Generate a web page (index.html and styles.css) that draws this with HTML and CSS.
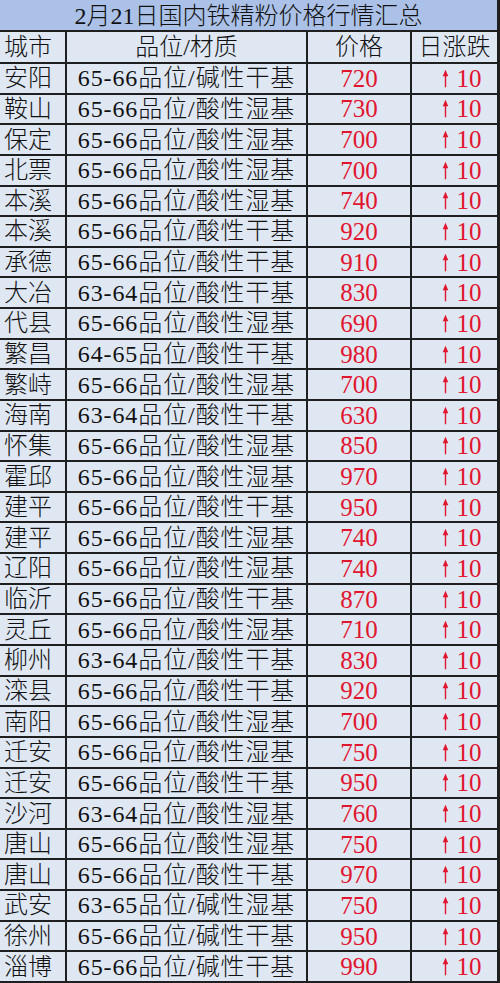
FILE: index.html
```html
<!DOCTYPE html>
<html lang="zh-CN">
<head>
<meta charset="utf-8">
<title>2月21日国内铁精粉价格行情汇总</title>
<link rel="stylesheet" href="styles.css">
</head>
<body>
<div class="sheet">
  <div class="title">2月21日国内铁精粉价格行情汇总</div>
  <div class="hd city">城市</div><div class="hd spec-h">品位/材质</div><div class="hd price-h">价格</div><div class="hd chg-h">日涨跌</div>

  <div class="city">安阳</div><div class="spec">65-66品位/碱性干基</div><div class="price">720</div><div class="chg"><svg class="up" viewBox="0 0 8 20"><path d="M4 20V5"/><polygon points="0.8,7.5 4,0 7.2,7.5"/></svg>10</div>
  <div class="city">鞍山</div><div class="spec">65-66品位/酸性湿基</div><div class="price">730</div><div class="chg"><svg class="up" viewBox="0 0 8 20"><path d="M4 20V5"/><polygon points="0.8,7.5 4,0 7.2,7.5"/></svg>10</div>
  <div class="city">保定</div><div class="spec">65-66品位/酸性湿基</div><div class="price">700</div><div class="chg"><svg class="up" viewBox="0 0 8 20"><path d="M4 20V5"/><polygon points="0.8,7.5 4,0 7.2,7.5"/></svg>10</div>
  <div class="city">北票</div><div class="spec">65-66品位/酸性湿基</div><div class="price">700</div><div class="chg"><svg class="up" viewBox="0 0 8 20"><path d="M4 20V5"/><polygon points="0.8,7.5 4,0 7.2,7.5"/></svg>10</div>
  <div class="city">本溪</div><div class="spec">65-66品位/酸性湿基</div><div class="price">740</div><div class="chg"><svg class="up" viewBox="0 0 8 20"><path d="M4 20V5"/><polygon points="0.8,7.5 4,0 7.2,7.5"/></svg>10</div>
  <div class="city">本溪</div><div class="spec">65-66品位/酸性干基</div><div class="price">920</div><div class="chg"><svg class="up" viewBox="0 0 8 20"><path d="M4 20V5"/><polygon points="0.8,7.5 4,0 7.2,7.5"/></svg>10</div>
  <div class="city">承德</div><div class="spec">65-66品位/酸性干基</div><div class="price">910</div><div class="chg"><svg class="up" viewBox="0 0 8 20"><path d="M4 20V5"/><polygon points="0.8,7.5 4,0 7.2,7.5"/></svg>10</div>
  <div class="city">大冶</div><div class="spec">63-64品位/酸性干基</div><div class="price">830</div><div class="chg"><svg class="up" viewBox="0 0 8 20"><path d="M4 20V5"/><polygon points="0.8,7.5 4,0 7.2,7.5"/></svg>10</div>
  <div class="city">代县</div><div class="spec">65-66品位/酸性湿基</div><div class="price">690</div><div class="chg"><svg class="up" viewBox="0 0 8 20"><path d="M4 20V5"/><polygon points="0.8,7.5 4,0 7.2,7.5"/></svg>10</div>
  <div class="city">繁昌</div><div class="spec">64-65品位/酸性干基</div><div class="price">980</div><div class="chg"><svg class="up" viewBox="0 0 8 20"><path d="M4 20V5"/><polygon points="0.8,7.5 4,0 7.2,7.5"/></svg>10</div>
  <div class="city">繁峙</div><div class="spec">65-66品位/酸性湿基</div><div class="price">700</div><div class="chg"><svg class="up" viewBox="0 0 8 20"><path d="M4 20V5"/><polygon points="0.8,7.5 4,0 7.2,7.5"/></svg>10</div>
  <div class="city">海南</div><div class="spec">63-64品位/酸性干基</div><div class="price">630</div><div class="chg"><svg class="up" viewBox="0 0 8 20"><path d="M4 20V5"/><polygon points="0.8,7.5 4,0 7.2,7.5"/></svg>10</div>
  <div class="city">怀集</div><div class="spec">65-66品位/酸性湿基</div><div class="price">850</div><div class="chg"><svg class="up" viewBox="0 0 8 20"><path d="M4 20V5"/><polygon points="0.8,7.5 4,0 7.2,7.5"/></svg>10</div>
  <div class="city">霍邱</div><div class="spec">65-66品位/酸性湿基</div><div class="price">970</div><div class="chg"><svg class="up" viewBox="0 0 8 20"><path d="M4 20V5"/><polygon points="0.8,7.5 4,0 7.2,7.5"/></svg>10</div>
  <div class="city">建平</div><div class="spec">65-66品位/酸性干基</div><div class="price">950</div><div class="chg"><svg class="up" viewBox="0 0 8 20"><path d="M4 20V5"/><polygon points="0.8,7.5 4,0 7.2,7.5"/></svg>10</div>
  <div class="city">建平</div><div class="spec">65-66品位/酸性湿基</div><div class="price">740</div><div class="chg"><svg class="up" viewBox="0 0 8 20"><path d="M4 20V5"/><polygon points="0.8,7.5 4,0 7.2,7.5"/></svg>10</div>
  <div class="city">辽阳</div><div class="spec">65-66品位/酸性湿基</div><div class="price">740</div><div class="chg"><svg class="up" viewBox="0 0 8 20"><path d="M4 20V5"/><polygon points="0.8,7.5 4,0 7.2,7.5"/></svg>10</div>
  <div class="city">临沂</div><div class="spec">65-66品位/酸性干基</div><div class="price">870</div><div class="chg"><svg class="up" viewBox="0 0 8 20"><path d="M4 20V5"/><polygon points="0.8,7.5 4,0 7.2,7.5"/></svg>10</div>
  <div class="city">灵丘</div><div class="spec">65-66品位/酸性湿基</div><div class="price">710</div><div class="chg"><svg class="up" viewBox="0 0 8 20"><path d="M4 20V5"/><polygon points="0.8,7.5 4,0 7.2,7.5"/></svg>10</div>
  <div class="city">柳州</div><div class="spec">63-64品位/酸性干基</div><div class="price">830</div><div class="chg"><svg class="up" viewBox="0 0 8 20"><path d="M4 20V5"/><polygon points="0.8,7.5 4,0 7.2,7.5"/></svg>10</div>
  <div class="city">滦县</div><div class="spec">65-66品位/酸性干基</div><div class="price">920</div><div class="chg"><svg class="up" viewBox="0 0 8 20"><path d="M4 20V5"/><polygon points="0.8,7.5 4,0 7.2,7.5"/></svg>10</div>
  <div class="city">南阳</div><div class="spec">65-66品位/酸性湿基</div><div class="price">700</div><div class="chg"><svg class="up" viewBox="0 0 8 20"><path d="M4 20V5"/><polygon points="0.8,7.5 4,0 7.2,7.5"/></svg>10</div>
  <div class="city">迁安</div><div class="spec">65-66品位/酸性湿基</div><div class="price">750</div><div class="chg"><svg class="up" viewBox="0 0 8 20"><path d="M4 20V5"/><polygon points="0.8,7.5 4,0 7.2,7.5"/></svg>10</div>
  <div class="city">迁安</div><div class="spec">65-66品位/酸性干基</div><div class="price">950</div><div class="chg"><svg class="up" viewBox="0 0 8 20"><path d="M4 20V5"/><polygon points="0.8,7.5 4,0 7.2,7.5"/></svg>10</div>
  <div class="city">沙河</div><div class="spec">63-64品位/酸性湿基</div><div class="price">760</div><div class="chg"><svg class="up" viewBox="0 0 8 20"><path d="M4 20V5"/><polygon points="0.8,7.5 4,0 7.2,7.5"/></svg>10</div>
  <div class="city">唐山</div><div class="spec">65-66品位/酸性湿基</div><div class="price">750</div><div class="chg"><svg class="up" viewBox="0 0 8 20"><path d="M4 20V5"/><polygon points="0.8,7.5 4,0 7.2,7.5"/></svg>10</div>
  <div class="city">唐山</div><div class="spec">65-66品位/酸性干基</div><div class="price">970</div><div class="chg"><svg class="up" viewBox="0 0 8 20"><path d="M4 20V5"/><polygon points="0.8,7.5 4,0 7.2,7.5"/></svg>10</div>
  <div class="city">武安</div><div class="spec">63-65品位/碱性湿基</div><div class="price">750</div><div class="chg"><svg class="up" viewBox="0 0 8 20"><path d="M4 20V5"/><polygon points="0.8,7.5 4,0 7.2,7.5"/></svg>10</div>
  <div class="city">徐州</div><div class="spec">65-66品位/碱性干基</div><div class="price">950</div><div class="chg"><svg class="up" viewBox="0 0 8 20"><path d="M4 20V5"/><polygon points="0.8,7.5 4,0 7.2,7.5"/></svg>10</div>
  <div class="city">淄博</div><div class="spec">65-66品位/碱性干基</div><div class="price">990</div><div class="chg"><svg class="up" viewBox="0 0 8 20"><path d="M4 20V5"/><polygon points="0.8,7.5 4,0 7.2,7.5"/></svg>10</div>
</div>
</body>
</html>
```

FILE: styles.css
```css
html, body {
  margin: 0;
  padding: 0;
  background: #1f1f1f;
}

.sheet {
  box-sizing: border-box;
  width: 500px;
  height: 983px;
  display: grid;
  grid-template-columns: 65px 239px 102px 1fr;
  grid-template-rows: 30px 30px repeat(30, 1fr);
  gap: 2px;
  padding: 0 3px 2px 0;
  background: #1f1f1f;
  font-family: "Liberation Serif", "Noto Sans CJK SC", serif;
  font-weight: 300;
  font-size: 24px;
  color: #111111;
}

.sheet > div {
  background: #dfe7f3;
  display: flex;
  align-items: center;
  white-space: nowrap;
  line-height: 1;
}

.sheet > .title {
  grid-column: 1 / -1;
  background: #abc1e7;
  justify-content: center;
  font-size: 24px;
  padding-top: 1px;
}

.city {
  padding-left: 4px;
}

.spec,
.spec-h,
.price-h,
.chg-h,
.price {
  justify-content: center;
}

.spec {
  letter-spacing: 0.9px;
}

.price {
  font-size: 25px;
  color: #e1152e;
}

.chg {
  justify-content: center;
  gap: 8px;
  padding-left: 14px;
  font-size: 25px;
  color: #e1152e;
}

.up {
  width: 7px;
  height: 19px;
  flex: none;
}

.up path {
  stroke: #e1152e;
  stroke-width: 1.6;
  fill: none;
}

.up polygon {
  fill: #e1152e;
}
```
